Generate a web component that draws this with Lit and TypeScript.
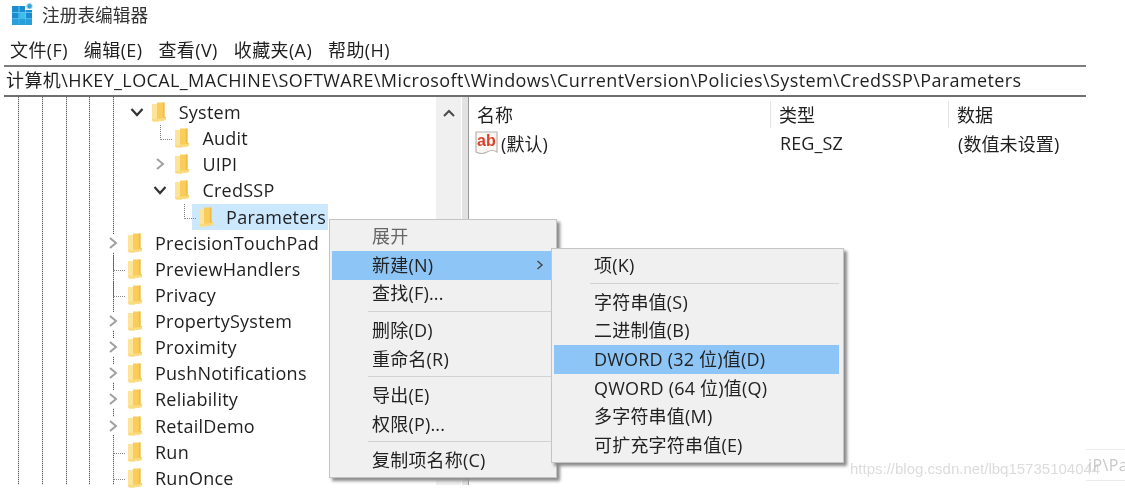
import { LitElement, html, css } from "lit";
import { customElement } from "lit/decorators.js";

type Row = { name: string; level: number; kind: "open" | "closed" | "leaf"; selected?: boolean };
const rows: Row[] = [
  { name: "System", level: 1, kind: "open" },
  { name: "Audit", level: 2, kind: "leaf" },
  { name: "UIPI", level: 2, kind: "closed" },
  { name: "CredSSP", level: 2, kind: "open" },
  { name: "Parameters", level: 3, kind: "leaf", selected: true },
  { name: "PrecisionTouchPad", level: 0, kind: "closed" },
  { name: "PreviewHandlers", level: 0, kind: "leaf" },
  { name: "Privacy", level: 0, kind: "leaf" },
  { name: "PropertySystem", level: 0, kind: "closed" },
  { name: "Proximity", level: 0, kind: "closed" },
  { name: "PushNotifications", level: 0, kind: "closed" },
  { name: "Reliability", level: 0, kind: "closed" },
  { name: "RetailDemo", level: 0, kind: "closed" },
  { name: "Run", level: 0, kind: "leaf" },
  { name: "RunOnce", level: 0, kind: "leaf" },
];

type Item = { label?: string; sep?: boolean; hot?: boolean; muted?: boolean; arrow?: boolean };
const ctxItems: Item[] = [
  { label: "展开", muted: true },
  { label: "新建(N)", hot: true, arrow: true },
  { label: "查找(F)..." },
  { sep: true },
  { label: "删除(D)" },
  { label: "重命名(R)" },
  { sep: true },
  { label: "导出(E)" },
  { label: "权限(P)..." },
  { sep: true },
  { label: "复制项名称(C)" },
];
const subItems: Item[] = [
  { label: "项(K)" },
  { sep: true },
  { label: "字符串值(S)" },
  { label: "二进制值(B)" },
  { label: "DWORD (32 位)值(D)", hot: true },
  { label: "QWORD (64 位)值(Q)" },
  { label: "多字符串值(M)" },
  { label: "可扩充字符串值(E)" },
];

const folder = html`<svg class="folder" width="14" height="20" viewBox="0 0 14 20">
  <path d="M0 2 L6 2 L6 19.5 L1 19.5 L0 18.5 Z" fill="#fce49a" />
  <path d="M5 0.5 L12.5 0.5 L12.5 15 L14 15 L14 18 L5 19.5 Z" fill="#f8cd5c" />
  <path d="M10.8 0.5 L12.5 0.5 L12.5 15.5 L10.8 15.5 Z" fill="#f1bc45" />
  <path d="M0 17 L14 16 L14 18 L5 19.5 L1 19.5 Z" fill="#fbdb80" />
</svg>`;

const chevRight = html`<svg class="chev-icon" width="12" height="14" viewBox="0 0 12 14"><polyline points="3,2 9,7 3,12" fill="none" stroke="#a0a0a0" stroke-width="2" /></svg>`;
const chevDown = html`<svg class="chev-icon" width="14" height="12" viewBox="0 0 14 12"><polyline points="1.5,3 7,9 12.5,3" fill="none" stroke="#333" stroke-width="2.2" /></svg>`;

@customElement("app-root")
export class AppRoot extends LitElement {
  static styles = css`
    :host {
      display: block;
      width: 1125px;
      height: 488px;
      overflow: hidden;
      background: #fff;
    }
    .page {
      position: relative;
      width: 1125px;
      height: 488px;
      overflow: hidden;
      display: flex;
      flex-direction: column;
      background: #fff;
      color: #1f1f1f;
      font-family: "Open Sans", "Noto Sans CJK SC", sans-serif;
      font-size: 18px;
      letter-spacing: 0.39px;
      filter: blur(0.5px);
    }
    .title {
      height: 26px;
      padding-top: 2px;
      box-sizing: border-box;
      display: flex;
      align-items: center;
      gap: 8px;
      padding-left: 12px;
      font-family: "Noto Sans CJK SC", sans-serif;
      font-size: 17.7px;
      letter-spacing: 0;
      color: #333;
    }
    .menubar {
      height: 41px;
      margin-left: 4px;
      width: 1082px;
      box-sizing: border-box;
      display: flex;
      align-items: center;
      gap: 16px;
      padding: 9px 0 2px 6px;
      border-bottom: 2px solid #7d7d7d;
    }
    .menubar span {
      white-space: nowrap;
    }
    .address {
      height: 30px;
      margin-left: 4px;
      width: 1082px;
      box-sizing: border-box;
      padding: 0 0 4px 2px;
      display: flex;
      align-items: center;
      white-space: nowrap;
      border-bottom: 2px solid #6f6f6f;
    }
    .main {
      flex: 1;
      display: flex;
      min-height: 0;
    }
    .tree {
      flex: 0 0 436px;
      box-sizing: border-box;
      padding-top: 2px;
      overflow: hidden;
      letter-spacing: 0.25px;
      background-image: repeating-linear-gradient(to bottom, #5a5a5a 0 1px, #d8d8d8 1px 2px),
        repeating-linear-gradient(to bottom, #5a5a5a 0 1px, #d8d8d8 1px 2px),
        repeating-linear-gradient(to bottom, #5a5a5a 0 1px, #d8d8d8 1px 2px),
        repeating-linear-gradient(to bottom, #5a5a5a 0 1px, #d8d8d8 1px 2px),
        repeating-linear-gradient(to bottom, #5a5a5a 0 1px, #d8d8d8 1px 2px);
      background-size: 1px 388px;
      background-repeat: no-repeat;
      background-position: 18px 0, 42px 0, 66px 0, 89px 0, 113px 0;
    }
    .row {
      height: 26.14px;
      display: flex;
      align-items: center;
    }
    .twisty {
      position: relative;
      flex: 0 0 24px;
      height: 100%;
      display: flex;
      align-items: center;
      justify-content: center;
    }
    .twisty.chev {
      background: linear-gradient(#fff, #fff) 0 center / 18px 18px no-repeat;
    }
    .chev-icon {
      margin-right: 6px;
    }
    .twisty.leaf::before {
      content: "";
      position: absolute;
      left: 9px;
      width: 11px;
      top: 0;
      height: 14px;
      border-left: 1px dotted #777;
      border-bottom: 1px dotted #888;
    }
    .label {
      display: flex;
      align-items: center;
      height: 100%;
      gap: 13px;
      padding-right: 2px;
    }
    .label.sel {
      background: #cce8ff;
      margin-left: -7px;
      padding-left: 7px;
    }
    .folder {
      flex: none;
    }
    .scroll {
      flex: 0 0 25px;
      height: 388px;
      background: #f0f0f0;
      display: flex;
      justify-content: center;
      padding-top: 11px;
      box-sizing: border-box;
    }
    .split {
      flex: 0 0 7px;
      height: 388px;
      margin-left: 1px;
      box-sizing: border-box;
      background: #e2e2e2;
      border-right: 1px solid #9a9a9a;
    }
    .list {
      flex: 1;
      min-width: 0;
      display: flex;
      flex-direction: column;
    }
    .lhead {
      display: grid;
      grid-template-columns: 302px 178px 1fr;
      padding: 4px 0 0 0;
      height: 31px;
      box-sizing: border-box;
    }
    .lhead span {
      padding-left: 8px;
      border-right: 1px solid #e4e4e4;
      font-family: "Noto Sans CJK SC", sans-serif;
      letter-spacing: 0;
      line-height: 27px;
    }
    .lhead span:last-child {
      border-right: 0;
    }
    .lrow {
      display: grid;
      grid-template-columns: 302px 178px 1fr;
      height: 28px;
      margin-top: 1px;
      align-items: center;
      letter-spacing: 0.1px;
    }
    .lrow > span {
      padding-left: 9px;
      white-space: nowrap;
    }
    .lrow > .nm {
      padding-left: 6px;
      display: flex;
      align-items: center;
      gap: 2px;
    }
    .menu {
      position: absolute;
      background: #f0f0f0;
      border: 1px solid #c4c4c4;
      box-shadow: 3px 3px 3px #8a8a8a;
      box-sizing: border-box;
      padding-top: 2.5px;
      letter-spacing: 0.2px;
    }
    .menu.ctx {
      left: 329px;
      top: 219px;
      width: 228px;
      height: 259px;
      padding-left: 2px;
      padding-right: 5px;
    }
    .menu.sub {
      left: 551px;
      top: 248px;
      width: 293px;
      height: 215px;
      padding-left: 2px;
      padding-right: 4px;
    }
    .item {
      height: 28.6px;
      box-sizing: border-box;
      display: flex;
      align-items: center;
      justify-content: space-between;
      padding: 0 7px 3px 40px;
      white-space: nowrap;
      color: #222;
    }
    .item svg {
      position: relative;
      top: 1px;
    }
    .item.hot {
      background: #8dc6f6;
    }
    .item.muted {
      color: #666;
    }
    .sep {
      height: 1px;
      background: #d2d2d2;
      margin: 2.5px 0 4.5px 36px;
    }
    .wm {
      position: absolute;
      left: 850px;
      top: 460px;
      font-family: "Liberation Sans", sans-serif;
      font-size: 15px;
      letter-spacing: 0;
      color: #dcdcdc;
      white-space: nowrap;
    }
    .corner {
      position: absolute;
      left: 1086px;
      top: 449px;
      width: 39px;
      height: 32px;
      box-sizing: border-box;
      border-top: 1px solid #ebebeb;
      border-bottom: 1px solid #ebebeb;
      padding: 4px 0 0 2px;
      overflow: hidden;
      color: #c8c8c8;
      white-space: nowrap;
      font-size: 16px;
    }
  `;

  private renderMenu(items: Item[], cls: string) {
    return html`<div class="menu ${cls}">
      ${items.map((it) =>
        it.sep
          ? html`<div class="sep"></div>`
          : html`<div class="item ${it.hot ? "hot" : ""} ${it.muted ? "muted" : ""}">
              <span>${it.label}</span>
              ${it.arrow
                ? html`<svg width="8" height="12" viewBox="0 0 8 12"><polyline points="1.5,2 6,6 1.5,10" fill="none" stroke="#444" stroke-width="1.4" /></svg>`
                : ""}
            </div>`,
      )}
    </div>`;
  }

  render() {
    return html`<div class="page">
      <div class="title">
        <svg width="22" height="22" viewBox="0 0 22 22">
          <path d="M0 3 H13 V7 H20 V22 H0 Z" fill="#1b8ccf" />
          <path d="M7 3 V22 M13.5 7 V22 M0 9.5 H20 M0 15.8 H20" stroke="#5cc4ee" stroke-width="1" fill="none" />
          <rect x="7.5" y="10" width="5.5" height="5.5" fill="#3fbdec" />
          <rect x="0" y="16.3" width="20" height="5.7" fill="#2ca6df" opacity="0.7" />
          <circle cx="17.5" cy="3.2" r="2.7" fill="#3aa0d8" stroke="#9fd8f0" stroke-width="1" />
        </svg>
        <span>注册表编辑器</span>
      </div>
      <div class="menubar">
        <span>文件(F)</span><span>编辑(E)</span><span>查看(V)</span><span>收藏夹(A)</span><span>帮助(H)</span>
      </div>
      <div class="address">计算机\\HKEY_LOCAL_MACHINE\\SOFTWARE\\Microsoft\\Windows\\CurrentVersion\\Policies\\System\\CredSSP\\Parameters</div>
      <div class="main">
        <div class="tree">
          ${rows.map(
            (r) => html`<div class="row" style="padding-left:${104 + r.level * 23.7}px">
              <span class="twisty ${r.kind === "leaf" ? "leaf" : "chev"}">
                ${r.kind === "open" ? chevDown : r.kind === "closed" ? chevRight : ""}
              </span>
              <span class="label ${r.selected ? "sel" : ""}">${folder}<span>${r.name}</span></span>
            </div>`,
          )}
        </div>
        <div class="scroll">
          <svg width="14" height="10" viewBox="0 0 14 10"><polyline points="2,8 7,3 12,8" fill="none" stroke="#4a4a4a" stroke-width="2" /></svg>
        </div>
        <div class="split"></div>
        <div class="list">
          <div class="lhead"><span>名称</span><span>类型</span><span>数据</span></div>
          <div class="lrow">
            <span class="nm">
              <svg width="24" height="26" viewBox="0 0 24 26">
                <path d="M1 2 H22 V22 Q17 19 12 22 T1 22 Z" fill="#fbf6f2" stroke="#b9b3ae" stroke-width="1.2" />
                <text x="2" y="16" font-family="Liberation Sans" font-weight="700" font-size="16" letter-spacing="0" fill="#d9432c">ab</text>
              </svg>
              <span>(默认)</span>
            </span>
            <span>REG_SZ</span>
            <span>(数值未设置)</span>
          </div>
        </div>
      </div>
      ${this.renderMenu(ctxItems, "ctx")} ${this.renderMenu(subItems, "sub")}
      <div class="wm">https://blog.csdn.net/lbq15735104044</div>
      <div class="corner">iP\\Pa</div>
    </div>`;
  }
}
